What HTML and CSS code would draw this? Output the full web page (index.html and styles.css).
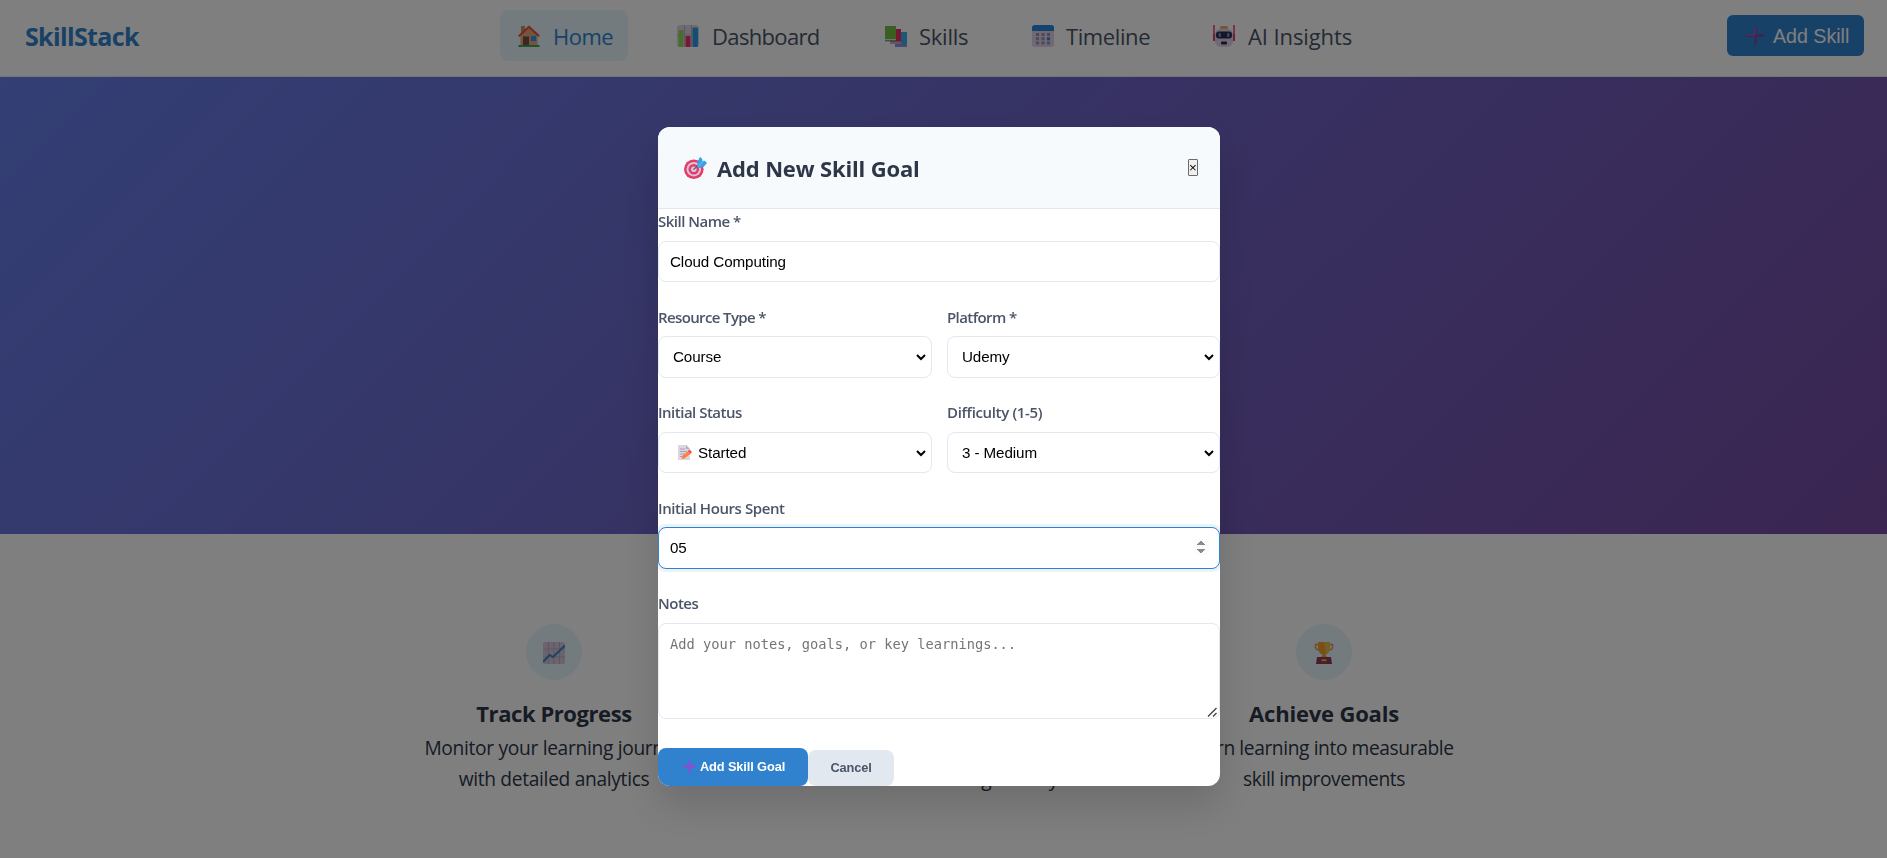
FILE: index.html
```html
<!DOCTYPE html>
<html lang="en">
<head>
<meta charset="utf-8">
<title>SkillStack</title>
<link rel="stylesheet" href="styles.css">
</head>
<body>
<header class="topbar">
  <div class="logo"><span>SkillStack</span></div>
  <nav class="nav">
    <a class="nav-item home active">
      <svg class="ico" viewBox="0 0 22 22"><path d="M3 1h4v7H3z" fill="#d98a5c"/><path d="M2.500 10 11 2l8.500 8v10.500h-17z" fill="#e8a878"/><path d="M.8 11.300 11 1.800l10.200 9.500" fill="none" stroke="#ef4d3d" stroke-width="2"/><path d="M5 11.500h6v8.500H5z" fill="#7b4a42"/><path d="M13 11h5v5h-5z" fill="#2b9bf0"/><path d="M.5 20h21v2H.5z" fill="#3aa55a"/></svg>
      <span class="t-home">Home</span></a>
    <a class="nav-item dash">
      <svg class="ico" viewBox="0 0 22 22"><rect width="22" height="22" rx="3" fill="#ded5e6"/><path d="M7.500 0v22M14.500 0v22M0 10h22" stroke="#b9b0c2"/><rect x="1.500" y="5" width="5" height="17" rx="1" fill="#8fdc5c"/><rect x="8.500" y="11" width="5" height="11" rx="1" fill="#f0306a"/><rect x="15.500" y="2.500" width="5.500" height="19.500" rx="1" fill="#2c9be8"/></svg>
      <span class="t-dash">Dashboard</span></a>
    <a class="nav-item skills">
      <svg class="ico" viewBox="0 0 22 22"><path d="M10 7h12v13l-2 2H10z" fill="#35b0e6"/><path d="M10 20h12v2H10z" fill="#a98be0"/><path d="M5 4h11v14H5z" fill="#e8305c"/><path d="M5 16.500h11V19H5z" fill="#e6a0c8"/><path d="M0 1h11v13.500H0z" fill="#76bd45"/><path d="M0 14h11v2H0z" fill="#d7efe0"/><path d="M0 15.300h11v1H0z" fill="#3f8a58"/></svg>
      <span class="t-skills">Skills</span></a>
    <a class="nav-item time">
      <svg class="ico" viewBox="0 0 22 22"><rect width="22" height="22" rx="3" fill="#ddd3ea"/><path d="M0 6V3a3 3 0 0 1 3-3h16a3 3 0 0 1 3 3v3z" fill="#2b86e0"/><g fill="#9b8fb0"><path d="M4 8h3v3H4zM9.500 8h3v3h-3zM15 8h3v3h-3zM4 12.300h3v3H4zM9.500 12.300h3v3h-3zM4 16.600h3v3H4zM9.500 16.600h3v3h-3zM15 16.600h3v3h-3z"/></g><path d="M15 12.300h3v3h-3z" fill="#2b86f0"/></svg>
      <span class="t-time">Timeline</span></a>
    <a class="nav-item">
      <svg class="ico" viewBox="0 0 22 22"><path d="M1 0v15M21 0v15" stroke="#e03a72" stroke-width="1.500"/><rect x="7" y="1" width="8" height="4" rx="2" fill="#eba63a"/><rect x="2" y="3.500" width="18" height="18.500" rx="6" fill="#dfd3ea"/><path d="M0 9h2v7H0zM20 9h2v7h-2z" fill="#e03a72"/><rect x="3" y="6.500" width="16" height="7" rx="3" fill="#38264f"/><rect x="5.500" y="8" width="2.500" height="4" rx="1" fill="#35a8e8"/><rect x="14" y="8" width="2.500" height="4" rx="1" fill="#35a8e8"/><rect x="8" y="16.500" width="6" height="3" rx="1" fill="#38264f"/></svg>
      <span class="t-ai">AI Insights</span></a>
  </nav>
  <button class="add-skill">
    <svg class="plus" viewBox="0 0 20 20"><path d="M10 1.500v17M1.500 10h17" stroke="#8044a8" stroke-width="2.600" stroke-linecap="round"/><path d="M9.500 1.500v8h-8" fill="none" stroke="#a676c8" stroke-linecap="round"/></svg>
    <span>Add Skill</span></button>
</header>
<section class="hero"></section>
<section class="features">
  <article class="feature">
    <div class="circle"><svg class="ico" viewBox="0 0 22 22"><rect width="22" height="22" rx="2" fill="#d6c6da"/><path d="M5.500 0v22M11 0v22M16.500 0v22M0 7h22M0 15h22" stroke="#bfadc6"/><path d="M0 20 6.500 13l3.500 2L22 3.500" stroke="#3789cc" stroke-width="2" fill="none"/></svg></div>
    <h3><span class="f-track">Track Progress</span></h3>
    <p><span class="f-l1">Monitor your learning journey</span><br><span class="f-l2">with detailed analytics</span></p>
  </article>
  <article class="feature">
    <div class="circle"></div>
    <h3><span>Smart Insights</span></h3>
    <p><span>See how far you have come</span><br><span class="f-mid">with visual learning history</span></p>
  </article>
  <article class="feature">
    <div class="circle"><svg class="ico" viewBox="0 0 22 22"><path d="M6 2.500H2.500v2.500c0 2 2 3 4 3M16 2.500h3.500v2.500c0 2-2 3-4 3" stroke="#e89a3c" stroke-width="1.500" fill="none"/><path d="M5 0h12v5c0 5-2.500 7-4.500 7.500L13 14l2 1.500H7L9 14l.5-1.500C7.500 12 5 10 5 5z" fill="#f0a030"/><path d="M11 0h6v5c0 4-2 6-4 7z" fill="#e8c04c"/><path d="M4 15h14l1 7H3z" fill="#8f3c52"/><path d="M8.500 17.200h5v2h-5z" fill="#e8b040"/></svg></div>
    <h3><span class="f-ach">Achieve Goals</span></h3>
    <p><span class="f-l3">Turn learning into measurable</span><br><span class="f-l4">skill improvements</span></p>
  </article>
</section>

<div class="overlay">
  <form class="modal">
    <div class="modal-head">
      <h2><svg class="target" viewBox="0 0 23 22"><circle cx="9.800" cy="12.200" r="9.800" fill="#e23d68"/><circle cx="9.800" cy="12.200" r="7.300" fill="#dcc3d8"/><circle cx="9.800" cy="12.200" r="5.300" fill="#e23d68"/><circle cx="9.800" cy="12.200" r="2.800" fill="#dcc3d8"/><path d="M9.500 12.500 17 6" stroke="#5b6b88" stroke-width="1.500"/><path d="m13.500 8.500 0-4L16 0l2 1.500.5 2.500L21 4l2 2-3.500 4-4 1z" fill="#36a3e8"/><path d="M14 9.500 20 3.500" stroke="#7cc6f2"/></svg><span>Add New Skill Goal</span></h2>
      <button type="button" class="close">×</button>
    </div>
    <div class="field">
      <label><span class="l-name">Skill Name *</span></label>
      <input class="control" type="text" value="Cloud Computing">
    </div>
    <div class="row">
      <div class="field">
        <label><span class="l-res">Resource Type *</span></label>
        <select class="control"><option>Course</option></select>
        <svg class="chev" viewBox="0 0 12 8"><path d="M2 2l4 4 4-4"/></svg>
      </div>
      <div class="field">
        <label><span class="l-plat">Platform *</span></label>
        <select class="control"><option>Udemy</option></select>
        <svg class="chev" viewBox="0 0 12 8"><path d="M2 2l4 4 4-4"/></svg>
      </div>
    </div>
    <div class="row">
      <div class="field status">
        <label><span class="l-stat">Initial Status</span></label>
        <select class="control"><option>Started</option></select>
        <svg class="chev" viewBox="0 0 12 8"><path d="M2 2l4 4 4-4"/></svg>
        <svg class="memo" viewBox="0 0 14 15"><path d="M0 0h8l4 4v11H0z" fill="#ddd5e4"/><path d="M8 0v4h4z" fill="#b8aec2"/><path d="M2 4h5M2 6.500h7M2 9h5M2 11.500h3" stroke="#a99fb5"/><path d="m3.500 14 1-3.500L11 5.500l2.500 2.500-7 5.500z" fill="#ff8040"/><path d="m10 6 1.500-1.500L14 7l-1.500 1.500z" fill="#f04a5c"/></svg>
      </div>
      <div class="field">
        <label><span class="l-diff">Difficulty (1-5)</span></label>
        <select class="control"><option>3 - Medium</option></select>
        <svg class="chev" viewBox="0 0 12 8"><path d="M2 2l4 4 4-4"/></svg>
      </div>
    </div>
    <div class="field">
      <label><span class="l-hours">Initial Hours Spent</span></label>
      <input class="control focused" type="number" value="05">
    </div>
    <div class="field notes">
      <label><span class="l-notes">Notes</span></label>
      <textarea class="control" placeholder="Add your notes, goals, or key learnings..."></textarea>
      <svg class="grip" viewBox="0 0 10 10"><path d="M1 9.500 9.500 1M6 9.500l3.500-3.500"/></svg>
    </div>
    <div class="actions">
      <button type="button" class="submit"><svg class="plus-sm" viewBox="0 0 20 20"><path d="M10 1.500v17M1.500 10h17" stroke="#8450d8" stroke-width="3.500" stroke-linecap="round"/></svg><span>Add Skill Goal</span></button>
      <button type="button" class="cancel"><span>Cancel</span></button>
    </div>
  </form>
</div>
</body>
</html>
```
FILE: styles.css
```css
* { box-sizing: border-box; margin: 0; padding: 0; }
body { height: 858px; overflow: hidden; background: #fff; color: #2d3748; font-family: "Open Sans", sans-serif; font-size: 20px; }
span { white-space: nowrap; }
svg { display: block; flex: none; }

.topbar { height: 77px; display: flex; align-items: flex-start; border-bottom: 1px solid #e2e8f0; padding: 10px 23px 0 25px; }
.logo { width: 475px; font-weight: 700; font-size: 25px; line-height: 53px; color: #3182ce; letter-spacing: -0.65px; }
.nav { display: flex; flex: 1; gap: 31px; }
.nav-item { display: flex; align-items: center; gap: 13px; height: 51px; padding: 0 0 0 18px; border-radius: 8px; font-size: 22px; color: #4a5568; }
.nav-item.active { background: #e6f7ff; color: #3182ce; }
.nav-item.skills, .nav-item.time { gap: 12px; }
.home { width: 128px; }
.dash { width: 177px; }
.skills { width: 116px; }
.time { width: 150px; }
.t-home { letter-spacing: -0.5px; }
.t-dash { letter-spacing: -0.65px; }
.t-skills { letter-spacing: -0.25px; }
.t-time { letter-spacing: -0.4px; }
.t-ai { letter-spacing: -0.1px; }
.ico { width: 22px; height: 22px; }
.add-skill { width: 137px; height: 41px; margin-top: 5px; border: 0; border-radius: 6px; background: #3182ce; color: #fff; font: 19.600px "Liberation Sans", sans-serif; display: flex; align-items: center; padding-left: 19px; gap: 8px; }
.add-skill span { margin-top: 2px; }
.plus { width: 19px; height: 19px; }

.hero { height: 457px; background: linear-gradient(135deg, #667eea 0%, #764ba2 100%); }
.features { display: flex; padding: 90px 0 0 361.500px; }
.feature { width: 385px; text-align: center; }
.circle { width: 56px; height: 56px; margin: 0 auto; border-radius: 50%; background: #e6f7ff; display: flex; align-items: center; justify-content: center; padding-top: 2px; }
.feature h3 { margin-top: 16px; font-size: 22px; line-height: 34px; }
.feature p { margin-top: 2px; font-size: 19.200px; line-height: 31px; }
.f-track { letter-spacing: -0.43px; }
.f-ach { letter-spacing: -0.2px; }
.f-l1, .f-l2 { letter-spacing: -0.32px; }
.f-l3, .f-l4 { letter-spacing: -0.4px; }

.overlay { position: fixed; inset: 0; background: rgba(0,0,0,.5); display: flex; justify-content: center; align-items: flex-start; padding: 127px 9px 0 0; }
.modal { width: 562px; height: 659px; background: #fff; border-radius: 12px; overflow: hidden; box-shadow: 0 20px 40px rgba(0,0,0,.15); }
.modal-head { height: 82px; display: flex; align-items: center; justify-content: space-between; padding: 0 22px 0 26px; background: #f7fafc; border-bottom: 1px solid #e2e8f0; }
.modal-head h2 { display: flex; align-items: center; gap: 10px; font-size: 22px; font-weight: 700; letter-spacing: -0.15px; }
.target { width: 23px; height: 22px; margin-top: 1px; }
.close { width: 10px; height: 17px; border: 1px solid #6b6b6b; border-radius: 1px; background: #efefef; color: #000; font: 13.333px/14px "Liberation Sans", sans-serif; }
.field { position: relative; display: flex; flex-direction: column; height: 95.500px; }
.field label { height: 31.900px; line-height: 24.500px; font-size: 15px; font-weight: 600; color: #4a5568; }
.l-name { letter-spacing: -0.5px; }
.l-res { letter-spacing: -0.62px; }
.l-plat { letter-spacing: -0.6px; }
.l-stat { letter-spacing: -0.5px; }
.l-diff { letter-spacing: -0.35px; }
.l-hours { letter-spacing: -0.42px; }
.l-notes { letter-spacing: -0.5px; }
.control { width: 100%; height: 41.500px; appearance: none; border: 1px solid #e2e8f0; border-radius: 8px; background: #fff; padding: 0 10px 1px 11px; font: 15.200px "Liberation Sans", sans-serif; letter-spacing: -0.1px; color: #000; outline: none; caret-color: transparent; }
select.control { padding: 0 30px 1px 14px; }
.row { display: grid; grid-template-columns: 274px 273px; gap: 15px; }
.status select.control { padding-left: 39px; }
.memo { position: absolute; left: 20px; top: 45px; width: 14px; height: 15px; }
.chev { position: absolute; right: 5px; top: 48.500px; width: 12px; height: 8px; fill: none; stroke: #000; stroke-width: 2; }
.focused { border-color: #3182ce; box-shadow: 0 0 0 3px rgba(49,130,206,.1); }
.focused::-webkit-inner-spin-button { opacity: 1; }
.notes { height: auto; }
textarea.control { height: 96px; padding: 12px 11px; font: 13.700px "DejaVu Sans Mono", monospace; letter-spacing: 0; resize: none; }
.grip { position: absolute; right: 3px; bottom: 2px; width: 10px; height: 10px; stroke: #444; stroke-width: 1.400; fill: none; }
.control::placeholder { color: #757575; }
.actions { display: flex; align-items: flex-end; padding-top: 29px; }
.actions button { border: 0; font: 600 12.800px "Liberation Sans", sans-serif; letter-spacing: -0.12px; display: flex; align-items: center; }
.submit { width: 150px; height: 38px; padding-left: 25px; gap: 4px; border-radius: 8px; background: #3182ce; color: #fff; }
.plus-sm { width: 13px; height: 13px; }
.cancel { width: 86px; height: 36px; justify-content: center; border-radius: 8px; background: #e2e8f0; color: #4a5568; }
```
